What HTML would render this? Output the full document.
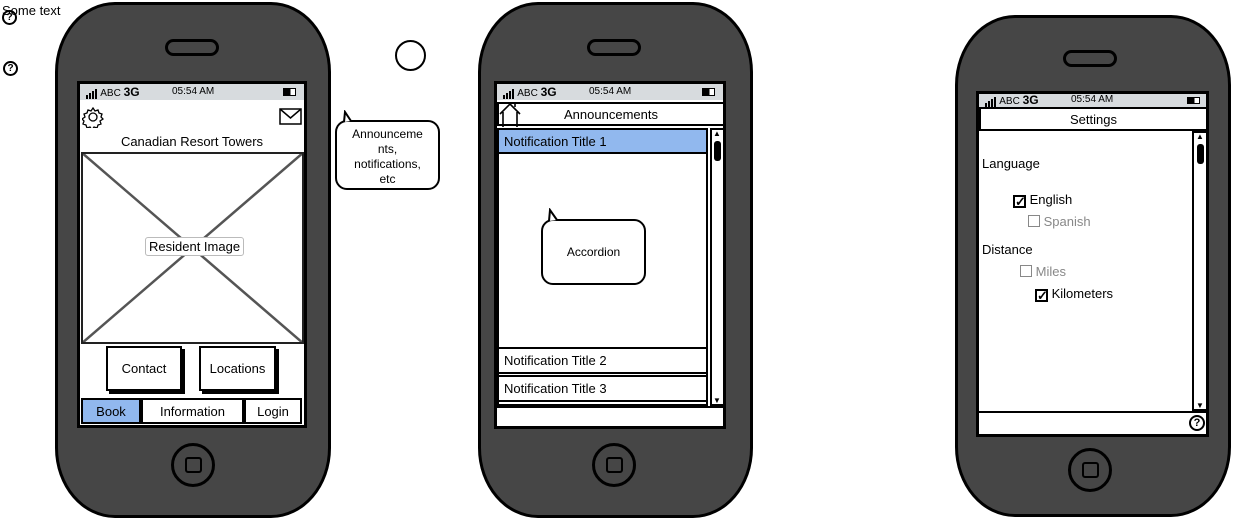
<!DOCTYPE html>
<html><head><meta charset="utf-8"><style>
*{box-sizing:border-box;margin:0;padding:0}
body{width:1234px;height:519px;background:#fff;position:relative;overflow:hidden;font-family:"Liberation Sans",sans-serif;font-size:13px;color:#000}
.a{position:absolute}
.phone{position:absolute;background:#464646;border:3px solid #000;border-radius:60px/70px}
.spk{position:absolute;border:3px solid #000;border-radius:14px;background:#464646}
.home{position:absolute;border:3px solid #000;border-radius:50%;width:44px;height:44px}
.home i{position:absolute;left:11px;top:11px;width:17px;height:16px;border:2.5px solid #000;border-radius:3px}
.scr{position:absolute;background:#fff;border:3px solid #000}
.sb{position:absolute;left:0;right:0;top:0;height:16px;background:#d7dbde;font-size:10px}
.box{position:absolute;border:2px solid #000;background:#fff;display:flex;align-items:center}
.c{justify-content:center}
.bar{display:inline-block;background:#000;width:2px;margin-right:1px;vertical-align:bottom}
.ck{display:inline-block;width:13px;height:13px;border:2px solid #000;vertical-align:-2px;font-size:13px;line-height:9px;font-weight:bold}
</style></head><body>
<div class="a" style="left:2px;top:3px;font-size:13px">Some text</div>
<div class="a" style="left:2px;top:10px;width:15px;height:15px;border:2px solid #000;border-radius:50%;font-size:10px;font-weight:bold;text-align:center;line-height:11px">?</div>
<div class="a" style="left:3px;top:61px;width:15px;height:15px;border:2px solid #000;border-radius:50%;font-size:10px;font-weight:bold;text-align:center;line-height:11px">?</div>
<div class="a" style="left:395px;top:40px;width:31px;height:31px;border:2px solid #000;border-radius:50%"></div>

<div class="a" style="left:335px;top:120px;width:105px;height:70px;border:2px solid #000;border-radius:12px;text-align:center;font-size:12px;line-height:15px;padding-top:5px;background:#fff">Announceme<br>nts,<br>notifications,<br>etc</div>
<svg class="a" style="left:340px;top:110px" width="20" height="14"><path d="M4 12 L5 2 L11 11" fill="#fff" stroke="#000" stroke-width="2"/></svg>

<div class="phone" style="left:55px;top:2px;width:276px;height:516px"></div>
<div class="spk" style="left:165px;top:39px;width:54px;height:17px"></div>
<div class="home" style="left:171px;top:443px"><i></i></div>
<div class="scr" style="left:77px;top:81px;width:230px;height:347px">
 <div class="sb"><span style="position:absolute;left:6px;top:1px"><span class="bar" style="height:4px"></span><span class="bar" style="height:6px"></span><span class="bar" style="height:8px"></span><span class="bar" style="height:10px"></span> ABC <b style="font-size:12px">3G</b></span><span style="position:absolute;left:92px;top:2px">05:54 AM</span><span style="position:absolute;right:8px;top:4px;width:13px;height:8px;border:1.5px solid #000;background:linear-gradient(90deg,#000 60%,#fff 60%)"></span></div>
 <svg class="a" style="left:2px;top:22px" width="22" height="22" viewBox="0 0 22 22"><path d="M11 2l2 3 3-1 1 3 3 1-1 3 2 2-3 2 1 3-3 1-1 3-3-1-2 3-2-3-3 1-1-3-3-1 1-3-2-2 3-2-1-3 3-1 1-3 3 1z" fill="none" stroke="#000" stroke-width="1.3"/><circle cx="11" cy="11" r="4" fill="none" stroke="#000" stroke-width="1.3"/></svg>
 <svg class="a" style="left:199px;top:24px" width="24" height="18"><rect x="1" y="1" width="21" height="15" fill="#fff" stroke="#000" stroke-width="1.5"/><path d="M1 1 L11.5 10 L22 1" fill="none" stroke="#000" stroke-width="1.5"/></svg>
 <div class="a" style="left:0;right:0;top:50px;text-align:center">Canadian Resort Towers</div>
 <div class="a" style="left:1px;top:68px;width:223px;height:192px;border:2px solid #222;overflow:hidden">
  <svg width="223" height="192" class="a" style="left:-2px;top:-2px"><path d="M0 0L223 192M223 0L0 192" stroke="#555" stroke-width="2.5"/></svg>
  <div class="a" style="left:62px;top:83px;border:1px solid #bbb;background:#fff;padding:1px 3px;border-radius:3px">Resident Image</div>
 </div>
 <div class="box c" style="left:26px;top:262px;width:76px;height:45px;box-shadow:3px 3px 0 #000">Contact</div>
 <div class="box c" style="left:119px;top:262px;width:77px;height:45px;box-shadow:3px 3px 0 #000">Locations</div>
 <div class="box c" style="left:1px;top:314px;width:60px;height:26px;background:#91b8ee">Book</div>
 <div class="box c" style="left:61px;top:314px;width:103px;height:26px">Information</div>
 <div class="box c" style="left:164px;top:314px;width:58px;height:26px">Login</div>
</div>

<div class="phone" style="left:478px;top:2px;width:275px;height:516px"></div>
<div class="spk" style="left:587px;top:39px;width:54px;height:17px"></div>
<div class="home" style="left:592px;top:443px"><i></i></div>
<div class="scr" style="left:494px;top:81px;width:232px;height:348px">
 <div class="sb"><span style="position:absolute;left:6px;top:1px"><span class="bar" style="height:4px"></span><span class="bar" style="height:6px"></span><span class="bar" style="height:8px"></span><span class="bar" style="height:10px"></span> ABC <b style="font-size:12px">3G</b></span><span style="position:absolute;left:92px;top:2px">05:54 AM</span><span style="position:absolute;right:8px;top:4px;width:13px;height:8px;border:1.5px solid #000;background:linear-gradient(90deg,#000 60%,#fff 60%)"></span></div>
 <div class="box c" style="left:0;top:18px;width:228px;height:24px">Announcements</div>
 <svg class="a" style="left:2px;top:18px" width="24" height="26"><path d="M1 12 L11 2 L21 12 M4 10 V25 M18 10 V25 M16 5 V1" fill="none" stroke="#000" stroke-width="1.6"/></svg>
 <div class="a" style="left:0;top:44px;width:211px;height:278px;border:2px solid #000"></div>
 <div class="box" style="left:0;top:44px;width:211px;height:26px;background:#91b8ee;padding-left:5px">Notification Title 1</div>
 <div class="box" style="left:0;top:263px;width:211px;height:27px;padding-left:5px">Notification Title 2</div>
 <div class="box" style="left:0;top:291px;width:211px;height:27px;padding-left:5px">Notification Title 3</div>
 <div class="a" style="left:213px;top:44px;width:15px;height:278px;border:2px solid #000;background:#fff"><div class="a" style="left:1px;top:-1px;font-size:8px">▲</div><div class="a" style="left:2px;top:11px;width:7px;height:20px;background:#000;border-radius:3px"></div><div class="a" style="left:1px;bottom:-1px;font-size:8px">▼</div></div>
 <div class="a" style="left:0;top:322px;width:228px;height:2px;background:#000"></div>
 <div class="a" style="left:44px;top:135px;width:105px;height:66px;border:2px solid #000;border-radius:12px;background:#fff;display:flex;align-items:center;justify-content:center;font-size:12px">Accordion</div>
 <svg class="a" style="left:48px;top:124px" width="20" height="14"><path d="M4 13 L5 2 L12 12" fill="#fff" stroke="#000" stroke-width="2"/></svg>
</div>

<div class="phone" style="left:955px;top:15px;width:276px;height:502px"></div>
<div class="spk" style="left:1063px;top:50px;width:54px;height:17px"></div>
<div class="home" style="left:1068px;top:448px"><i></i></div>
<div class="scr" style="left:976px;top:91px;width:233px;height:346px">
 <div class="sb" style="height:13px"><span style="position:absolute;left:6px;top:-1px"><span class="bar" style="height:4px"></span><span class="bar" style="height:6px"></span><span class="bar" style="height:8px"></span><span class="bar" style="height:10px"></span> ABC <b style="font-size:12px">3G</b></span><span style="position:absolute;left:92px;top:0px">05:54 AM</span><span style="position:absolute;right:6px;top:3px;width:13px;height:7px;border:1.5px solid #000;background:linear-gradient(90deg,#000 60%,#fff 60%)"></span></div>
 <div class="box c" style="left:0;top:13px;width:229px;height:24px">Settings</div>
 <div class="a" style="left:3px;top:62px">Language</div>
 <div class="a" style="left:34px;top:98px"><span class="ck">✓</span> English</div>
 <div class="a" style="left:49px;top:120px;color:#888"><span style="display:inline-block;width:12px;height:12px;border:1.5px solid #888;vertical-align:-1px"></span> Spanish</div>
 <div class="a" style="left:3px;top:148px">Distance</div>
 <div class="a" style="left:41px;top:170px;color:#888"><span style="display:inline-block;width:12px;height:12px;border:1.5px solid #888;vertical-align:-1px"></span> Miles</div>
 <div class="a" style="left:56px;top:192px"><span class="ck">✓</span> Kilometers</div>
 <div class="a" style="left:213px;top:37px;width:16px;height:280px;border:2px solid #000;background:#fff"><div class="a" style="left:2px;top:-1px;font-size:8px">▲</div><div class="a" style="left:3px;top:11px;width:7px;height:20px;background:#000;border-radius:3px"></div><div class="a" style="left:2px;bottom:-1px;font-size:8px">▼</div></div>
 <div class="a" style="left:0;top:317px;width:229px;height:2px;background:#000"></div>
 <div class="a" style="left:210px;top:321px;width:16px;height:16px;border:2px solid #000;border-radius:50%;font-size:11px;font-weight:bold;text-align:center;line-height:12px">?</div>
</div>
</body></html>
